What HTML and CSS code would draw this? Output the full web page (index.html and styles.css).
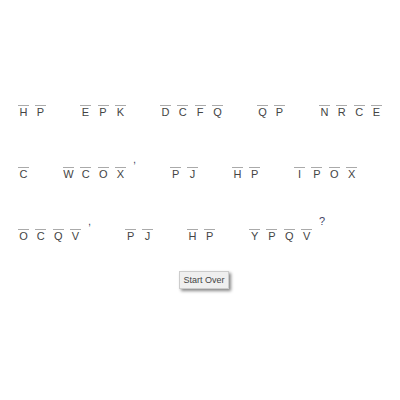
FILE: index.html
```
<!DOCTYPE html>
<html lang="en">
<head>
    <meta charset="UTF-8">
    <meta name="viewport" content="width=device-width, initial-scale=1.0">
    <title>Cryptogram</title>
    <link rel="stylesheet" href="styles.css">
</head>
<body>
    <main class="puzzle">
        <div class="line">
            <div class="word two"><span class="letter">H</span><span class="letter">P</span></div>
            <div class="word three"><span class="letter">E</span><span class="letter">P</span><span class="letter">K</span></div>
            <div class="word four"><span class="letter">D</span><span class="letter">C</span><span class="letter">F</span><span class="letter">Q</span></div>
            <div class="word two"><span class="letter">Q</span><span class="letter">P</span></div>
            <div class="word four"><span class="letter">N</span><span class="letter">R</span><span class="letter">C</span><span class="letter">E</span></div>
        </div>
        <div class="line">
            <div class="word"><span class="letter">C</span></div>
            <div class="group">
                <div class="word four"><span class="letter">W</span><span class="letter">C</span><span class="letter">O</span><span class="letter">X</span></div>
                <span class="mark">,</span>
            </div>
            <div class="word two"><span class="letter">P</span><span class="letter">J</span></div>
            <div class="word two"><span class="letter">H</span><span class="letter">P</span></div>
            <div class="word four"><span class="letter">I</span><span class="letter">P</span><span class="letter">O</span><span class="letter">X</span></div>
        </div>
        <div class="line">
            <div class="group">
                <div class="word four"><span class="letter">O</span><span class="letter">C</span><span class="letter">Q</span><span class="letter">V</span></div>
                <span class="mark">,</span>
            </div>
            <div class="word two"><span class="letter">P</span><span class="letter">J</span></div>
            <div class="word two"><span class="letter">H</span><span class="letter">P</span></div>
            <div class="group">
                <div class="word four"><span class="letter">Y</span><span class="letter">P</span><span class="letter">Q</span><span class="letter">V</span></div>
                <span class="mark">?</span>
            </div>
        </div>
        <button type="button" class="btn">Start Over</button>
    </main>
</body>
</html>
```
FILE: styles.css
```
body {
    margin: 0;
    background: white;
    color: #444;
    font-family: "Liberation Sans", Arial, sans-serif;
    font-size: 11px;
    line-height: 13px;
}
.puzzle {
    padding: 91px 18px 20px;
    display: flex;
    flex-direction: column;
    gap: 34px;
}
.line {
    display: flex;
    gap: 34px;
}
.group {
    display: flex;
    gap: 7px;
}
.word {
    display: flex;
    justify-content: space-between;
}
.two {
    width: 28px;
}
.three {
    width: 46px;
}
.four {
    width: 63px;
}
/* the space above the rule is where the guess goes */
.letter {
    width: 11px;
    display: flex;
    flex-direction: column;
    align-items: center;
}
.letter::before {
    content: "";
    width: 11px;
    height: 14px;
    border-bottom: 1px solid #aaa;
}
.mark {
    color: #446;
}
.btn {
    align-self: center;
    margin: -6px 0 0 8px;
    padding: 3px;
    background: #efefef;
    border: 1px solid #ccc;
    box-shadow: 2px 2px 3px #888;
    color: #444;
    font-family: inherit;
    font-size: 9px;
    line-height: 10px;
    cursor: pointer;
}
.btn:hover {
    background: #e4e4e4;
}
```
